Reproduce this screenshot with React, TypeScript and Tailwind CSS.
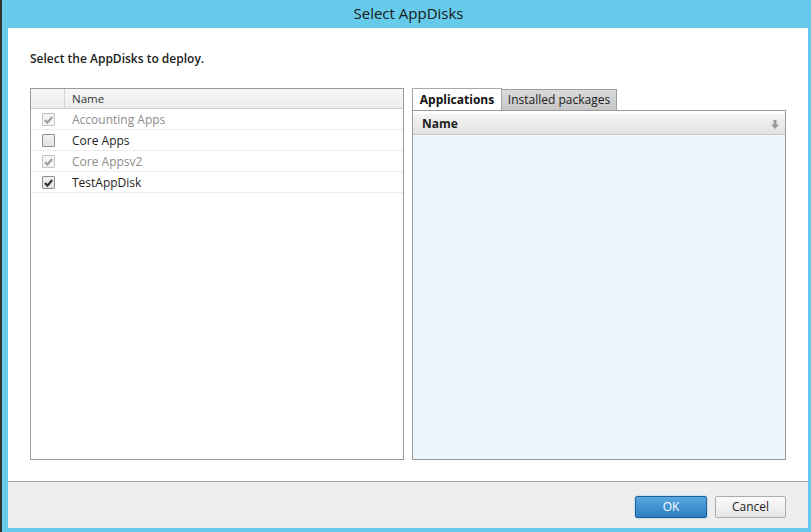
const rows = [
  { name: "Accounting Apps", checked: true, disabled: true },
  { name: "Core Apps", checked: false, disabled: false },
  { name: "Core Appsv2", checked: true, disabled: true },
  { name: "TestAppDisk", checked: true, disabled: false },
];

function Checkbox({ checked, disabled }: { checked: boolean; disabled: boolean }) {
  return (
    <div
      className={`w-[13px] h-[13px] border flex items-center justify-center rounded-[1px] ${
        disabled ? "border-[#c4c4c4] bg-[#f4f4f4]" : "border-[#8f8f8f] bg-gradient-to-b from-[#f2f2f2] to-[#e2e2e2]"
      }`}
    >
      {checked && (
        <svg width="9" height="8" viewBox="0 0 9 8">
          <path
            d="M1 4 L3.4 6.6 L8.2 1"
            fill="none"
            stroke={disabled ? "#a0a0a0" : "#333"}
            strokeWidth="2.2"
          />
        </svg>
      )}
    </div>
  );
}

export default function App() {
  return (
    <div
      className="w-[811px] h-[532px] bg-[#66cbea] flex flex-col border-l-2 border-[#333] overflow-hidden"
      style={{ fontFamily: '"Open Sans", "Noto Sans", sans-serif' }}
    >
      {/* Title bar */}
      <div className="h-[28px] flex items-center justify-center text-[15px] text-[#1a1a1a] pl-[4px] pb-[2px]">
        Select AppDisks
      </div>

      {/* Content */}
      <div className="ml-[6px] mr-[3px] flex flex-col flex-1 mb-[4px]">
        <div className="bg-white flex-1 flex flex-col px-[22px]">
          <div className="pt-[22px] h-[60px] text-[12px] font-semibold text-[#222]">
            Select the AppDisks to deploy.
          </div>

          <div className="flex gap-[8px] h-[372px]">
            {/* Left list */}
            <div className="w-[374px] border border-[#9a9a9a] flex flex-col">
              <div className="h-[20px] flex bg-gradient-to-b from-[#f7f7f7] to-[#ececec] border-b border-[#cfcfcf] text-[11.5px] text-[#333]">
                <div className="w-[34px] border-r border-[#d4d4d4]" />
                <div className="pl-[7px] flex items-center">Name</div>
              </div>
              {rows.map((r) => (
                <div key={r.name} className="h-[21px] flex items-center border-b border-[#ececec] text-[12px] pt-[1px]">
                  <div className="w-[34px] flex justify-center">
                    <Checkbox checked={r.checked} disabled={r.disabled} />
                  </div>
                  <div className={`pl-[7px] ${r.disabled ? "text-[#8d8d8d]" : "text-[#1e1e1e]"}`}>{r.name}</div>
                </div>
              ))}
            </div>

            {/* Right tabs */}
            <div className="w-[374px] flex flex-col">
              <div className="flex h-[22px] text-[12px]">
                <div className="w-[90px] bg-white border border-b-0 border-[#a8a8a8] flex items-center justify-center font-bold text-[#111]">
                  Applications
                </div>
                <div className="w-[115px] mt-[1px] bg-gradient-to-b from-[#dadada] to-[#c6c6c6] border border-l-0 border-b-0 border-[#9c9c9c] flex items-center justify-center text-[#222]">
                  Installed packages
                </div>
              </div>
              <div className="flex-1 border border-[#9a9a9a] flex flex-col bg-[#eff5fc]">
                <div className="bg-white h-[3px]" />
                <div className="h-[21px] flex items-center justify-between pl-[9px] pr-[6px] bg-gradient-to-b from-[#f4f4f4] to-[#e2e2e2] border-b border-[#c8c8c8] text-[12px] font-bold text-[#222]">
                  <span>Name</span>
                  <svg width="8" height="9" viewBox="0 0 8 9">
                    <rect x="2.5" y="0" width="3" height="5" fill="#9a9a9a" />
                    <path d="M0 4.5 H8 L4 9 Z" fill="#9a9a9a" />
                  </svg>
                </div>
              </div>
            </div>
          </div>
          <div className="flex-1" />
        </div>

        {/* Footer */}
        <div className="h-[47px] bg-[#eeeeee] border-t border-[#a5a5a5] flex items-center justify-end gap-[8px] pr-[22px] pt-[4px]">
          <button className="w-[72px] h-[22px] rounded-[2px] border border-[#1d5f97] bg-gradient-to-b from-[#58a7df] to-[#2d7ec2] text-white text-[12px] shadow-[0_0_2px_#7ab9e8]">
            OK
          </button>
          <button className="w-[71px] h-[22px] rounded-[2px] border border-[#adadad] bg-gradient-to-b from-[#fbfbfb] to-[#e6e6e6] text-[#222] text-[12px]">
            Cancel
          </button>
        </div>
      </div>
    </div>
  );
}
